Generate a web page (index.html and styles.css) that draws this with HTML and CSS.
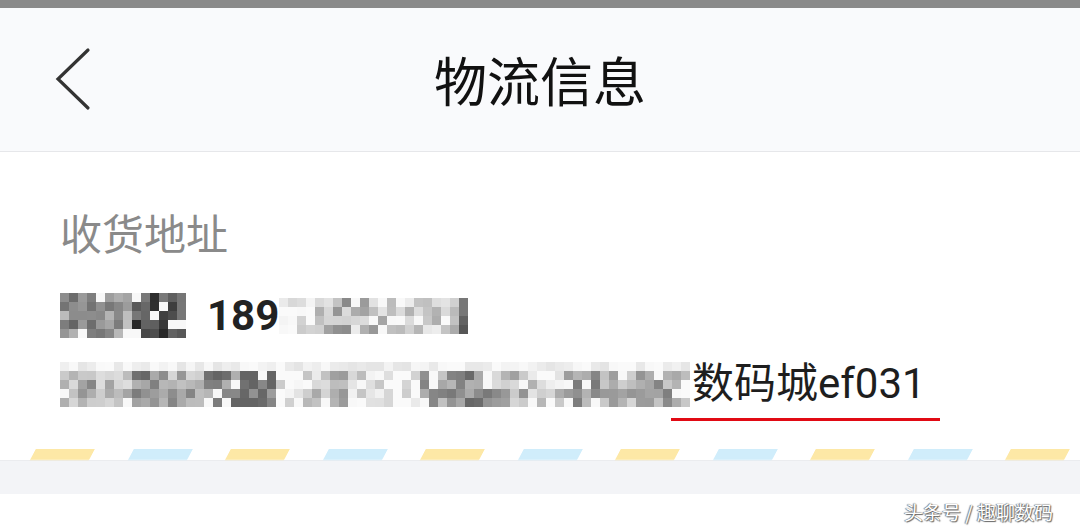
FILE: index.html
```html
<!DOCTYPE html>
<html lang="zh-CN">
<head>
    <meta charset="UTF-8">
    <title>物流信息</title>
    <link rel="stylesheet" href="styles.css">
</head>
<body>
    <div class="statusbar"></div>
    <header class="nav">
        <span class="back">
            <svg width="40" height="66" viewBox="0 0 40 66">
                <polyline points="34,3 4,32 34,61" fill="none" stroke="#333" stroke-width="3.2" stroke-linecap="round" stroke-linejoin="miter"/>
            </svg>
        </span>
        <h1>物流信息</h1>
        <span></span>
    </header>

    <section class="addr">
        <div class="label">收货地址</div>
        <div class="who">
            <div class="mosaic" data-cols="14" data-rows="5" data-min="60" data-max="235" data-seed="7"></div>
            <b class="phone">189</b>
            <div class="mosaic" data-cols="21" data-rows="4" data-min="90" data-max="245" data-seed="19"></div>
        </div>
        <div class="where">
            <div class="mosaic light" data-cols="70" data-rows="5" data-min="120" data-max="250" data-seed="31"></div>
            <span class="mark">数码城ef031</span>
        </div>
    </section>

    <div class="stripes"></div>
    <div class="band"></div>
    <div class="foot"><span class="wm">头条号 / 趣聊数码</span></div>

    <script>
        // fake blurred text blocks
        function rnd(seed){
            var s = seed;
            return function(){
                s = (s * 9301 + 49297) % 233280;
                return s / 233280;
            };
        }
        var boxes = document.querySelectorAll(".mosaic");
        for(var i=0;i<boxes.length;i++){
            var b = boxes[i];
            var cols = +b.dataset.cols, rows = +b.dataset.rows;
            var lo = +b.dataset.min, hi = +b.dataset.max;
            var r = rnd(+b.dataset.seed);
            var tone = [];
            for(var k=0;k<cols;k++){
                // neighbours share a tone so it reads like smeared glyphs
                tone[k] = (k%4==0 || k==0) ? lo + r()*(hi-lo) : tone[k-1];
            }
            b.style.gridTemplateColumns = "repeat(" + cols + ", 9px)";
            for(var y=0;y<rows;y++){
                for(var x=0;x<cols;x++){
                    var c = document.createElement("i");
                    var g = tone[x] + (r()-0.5)*90;
                    if(b.classList.contains("light") && y==0) g = 228 + r()*25;
                    if(r() < 0.1) g = 248;
                    g = Math.max(lo-20, Math.min(250, Math.round(g)));
                    c.style.background = "rgb(" + g + "," + g + "," + g + ")";
                    b.appendChild(c);
                }
            }
        }
    </script>
</body>
</html>
```

FILE: styles.css
```css
*{
    margin: 0;
    padding: 0;
    box-sizing: border-box;
}
body{
    width: 1080px;
    height: 528px;
    overflow: hidden;
    background: #fff;
    font-family: Roboto, "Noto Sans CJK SC", sans-serif;
}
.statusbar{
    height: 8px;
    background: #8a8a8a;
}
.nav{
    height: 144px;
    background: #f9fafc;
    border-bottom: 1px solid #e6e7ea;
    display: grid;
    grid-template-columns: 1fr auto 1fr;
    align-items: center;
}
.back{
    display: flex;
    padding-left: 54px;
}
.nav h1{
    font-family: "Noto Sans CJK SC", sans-serif;
    font-size: 53px;
    font-weight: 400;
    color: #111;
    line-height: 1;
}
.addr{
    padding: 56px 0 0 60px;
}
.label{
    font-family: "Noto Sans CJK SC", sans-serif;
    font-size: 42px;
    line-height: 48px;
    color: #8a8a8a;
}
.who{
    margin-top: 37px;
    height: 45px;
    display: flex;
    align-items: center;
}
.phone{
    font-size: 42px;
    font-weight: 700;
    color: #222;
    margin-left: 21px;
    line-height: 1;
}
.mosaic{
    display: grid;
    filter: blur(0.3px);
}
.mosaic i{
    display: block;
    width: 9px;
    height: 9px;
}
.where{
    margin-top: 22px;
    display: flex;
    align-items: center;
}
.mark{
    position: relative;
    margin-left: 2px;
    font-size: 42px;
    color: #1e1e1e;
    line-height: 48px;
}
.mark::after{
    content: "";
    position: absolute;
    left: -21px;
    right: -14px;
    bottom: -13px;
    height: 3px;
    background: #e10a14;
}
.stripes{
    margin-top: 41px;
    height: 11px;
    background: repeating-linear-gradient(90deg,
        transparent 0 30px,
        #fde8a6 30px 89px,
        transparent 89px 128px,
        #d0edfb 128px 187px,
        transparent 187px 195px);
    transform: skewX(-28deg);
    transform-origin: left bottom;
    filter: blur(0.5px);
}
.band{
    height: 34px;
    background: #f3f4f7;
    border-top: 1px solid #ebecef;
}
.foot{
    display: flex;
    justify-content: flex-end;
    padding: 4px 27px 0 0;
}
.wm{
    font-family: "Noto Sans CJK SC", sans-serif;
    font-size: 19px;
    color: #fff;
    text-shadow: 0 0 1px #555, 1px 1px 1px #666, -1px 0 1px #888;
}
```
